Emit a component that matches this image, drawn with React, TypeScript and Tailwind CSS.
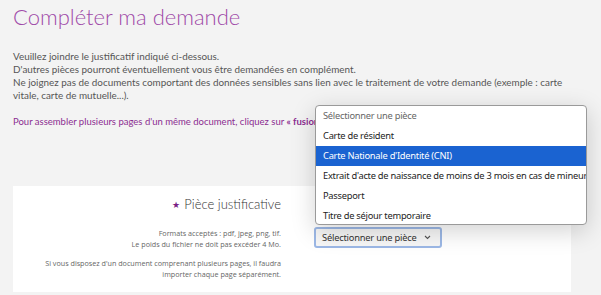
import React from "react";

export default function App() {
  const options = [
    "Carte de résident",
    "Carte Nationale d'Identité (CNI)",
    "Extrait d'acte de naissance de moins de 3 mois en cas de mineur",
    "Passeport",
    "Titre de séjour temporaire",
  ];
  return (
    <div className="relative w-[601px] h-[295px] overflow-hidden bg-[#f3f3f3]">
      <div className="pl-[13px] pt-[3px]">
        <h1 className="text-[22px] leading-[28px] font-light text-[#9f4aa8] [font-family:Lato,sans-serif]">
          Compléter ma demande
        </h1>
        <div className="mt-[19px] text-[9.9px] leading-[13px] text-[#555] [font-family:Lato,sans-serif] w-[562px]">
          <p>Veuillez joindre le justificatif indiqué ci-dessous.</p>
          <p>D'autres pièces pourront éventuellement vous être demandées en complément.</p>
          <p>
            Ne joignez pas de documents comportant des données sensibles sans lien avec le traitement de votre demande (exemple : carte vitale, carte de mutuelle...).
          </p>
        </div>
        <p className="mt-[13px] text-[9.5px] leading-[13px] text-[#8b2d91] [font-family:Lato,sans-serif]">
          Pour assembler plusieurs pages d'un même document, cliquez sur <b className="font-bold">« fusion</b>
        </p>
      </div>

      <div className="absolute left-[13px] top-[186px] w-[558px] h-[106px] bg-white flex">
        <div className="w-[268px] flex flex-col items-end text-right">
          <div className="mt-[10px] text-[13px] leading-[16px] text-[#333] font-light [font-family:Lato,sans-serif]">
            <span className="text-[#7a1f86] text-[9px] mr-[4px] align-[1px]">★</span>Pièce justificative
          </div>
          <div className="mt-[15px] text-[7.2px] leading-[11px] text-[#666] [font-family:'Open_Sans',sans-serif]">
            <p>Formats acceptés : pdf, jpeg, png, tif.</p>
            <p>Le poids du fichier ne doit pas excéder 4 Mo.</p>
            <p className="mt-[8px]">Si vous disposez d'un document comprenant plusieurs pages, il faudra</p>
            <p>importer chaque page séparément.</p>
          </div>
        </div>
        <div className="pl-[33px] pt-[41px]">
          <div className="w-[128px] h-[21px] rounded-[3px] border-2 border-[#9cb8e6] bg-[#f7f7f7] flex items-center justify-between pl-[6px] pr-[9px] text-[9.3px] tracking-[-0.2px] text-[#333] whitespace-nowrap [font-family:'Noto_Sans',sans-serif]">
            <span>Sélectionner une pièce</span>
            <svg width="7" height="5" viewBox="0 0 7 5" fill="none">
              <path d="M1 1l2.5 2.5L6 1" stroke="#555" strokeWidth="1.1" />
            </svg>
          </div>
        </div>
      </div>

      <div className="absolute left-[315px] top-[105px] w-[272px] h-[120px] bg-white rounded-[4px] border border-[#9a9a9a] shadow-[0_6px_24px_rgba(0,0,0,0.18)] overflow-hidden [font-family:'Noto_Sans',sans-serif] text-[9.3px] tracking-[-0.25px]">
        <div className="h-[20px] flex items-center pl-[7px] text-[#666]">Sélectionner une pièce</div>
        {options.map((o, i) => (
          <div
            key={o}
            className={
              i === 1
                ? "h-[20px] flex items-center pl-[7px] bg-[#1a63d1] text-white whitespace-nowrap"
                : "h-[20px] flex items-center pl-[7px] text-[#222] whitespace-nowrap"
            }
          >
            {o}
          </div>
        ))}
      </div>
    </div>
  );
}
